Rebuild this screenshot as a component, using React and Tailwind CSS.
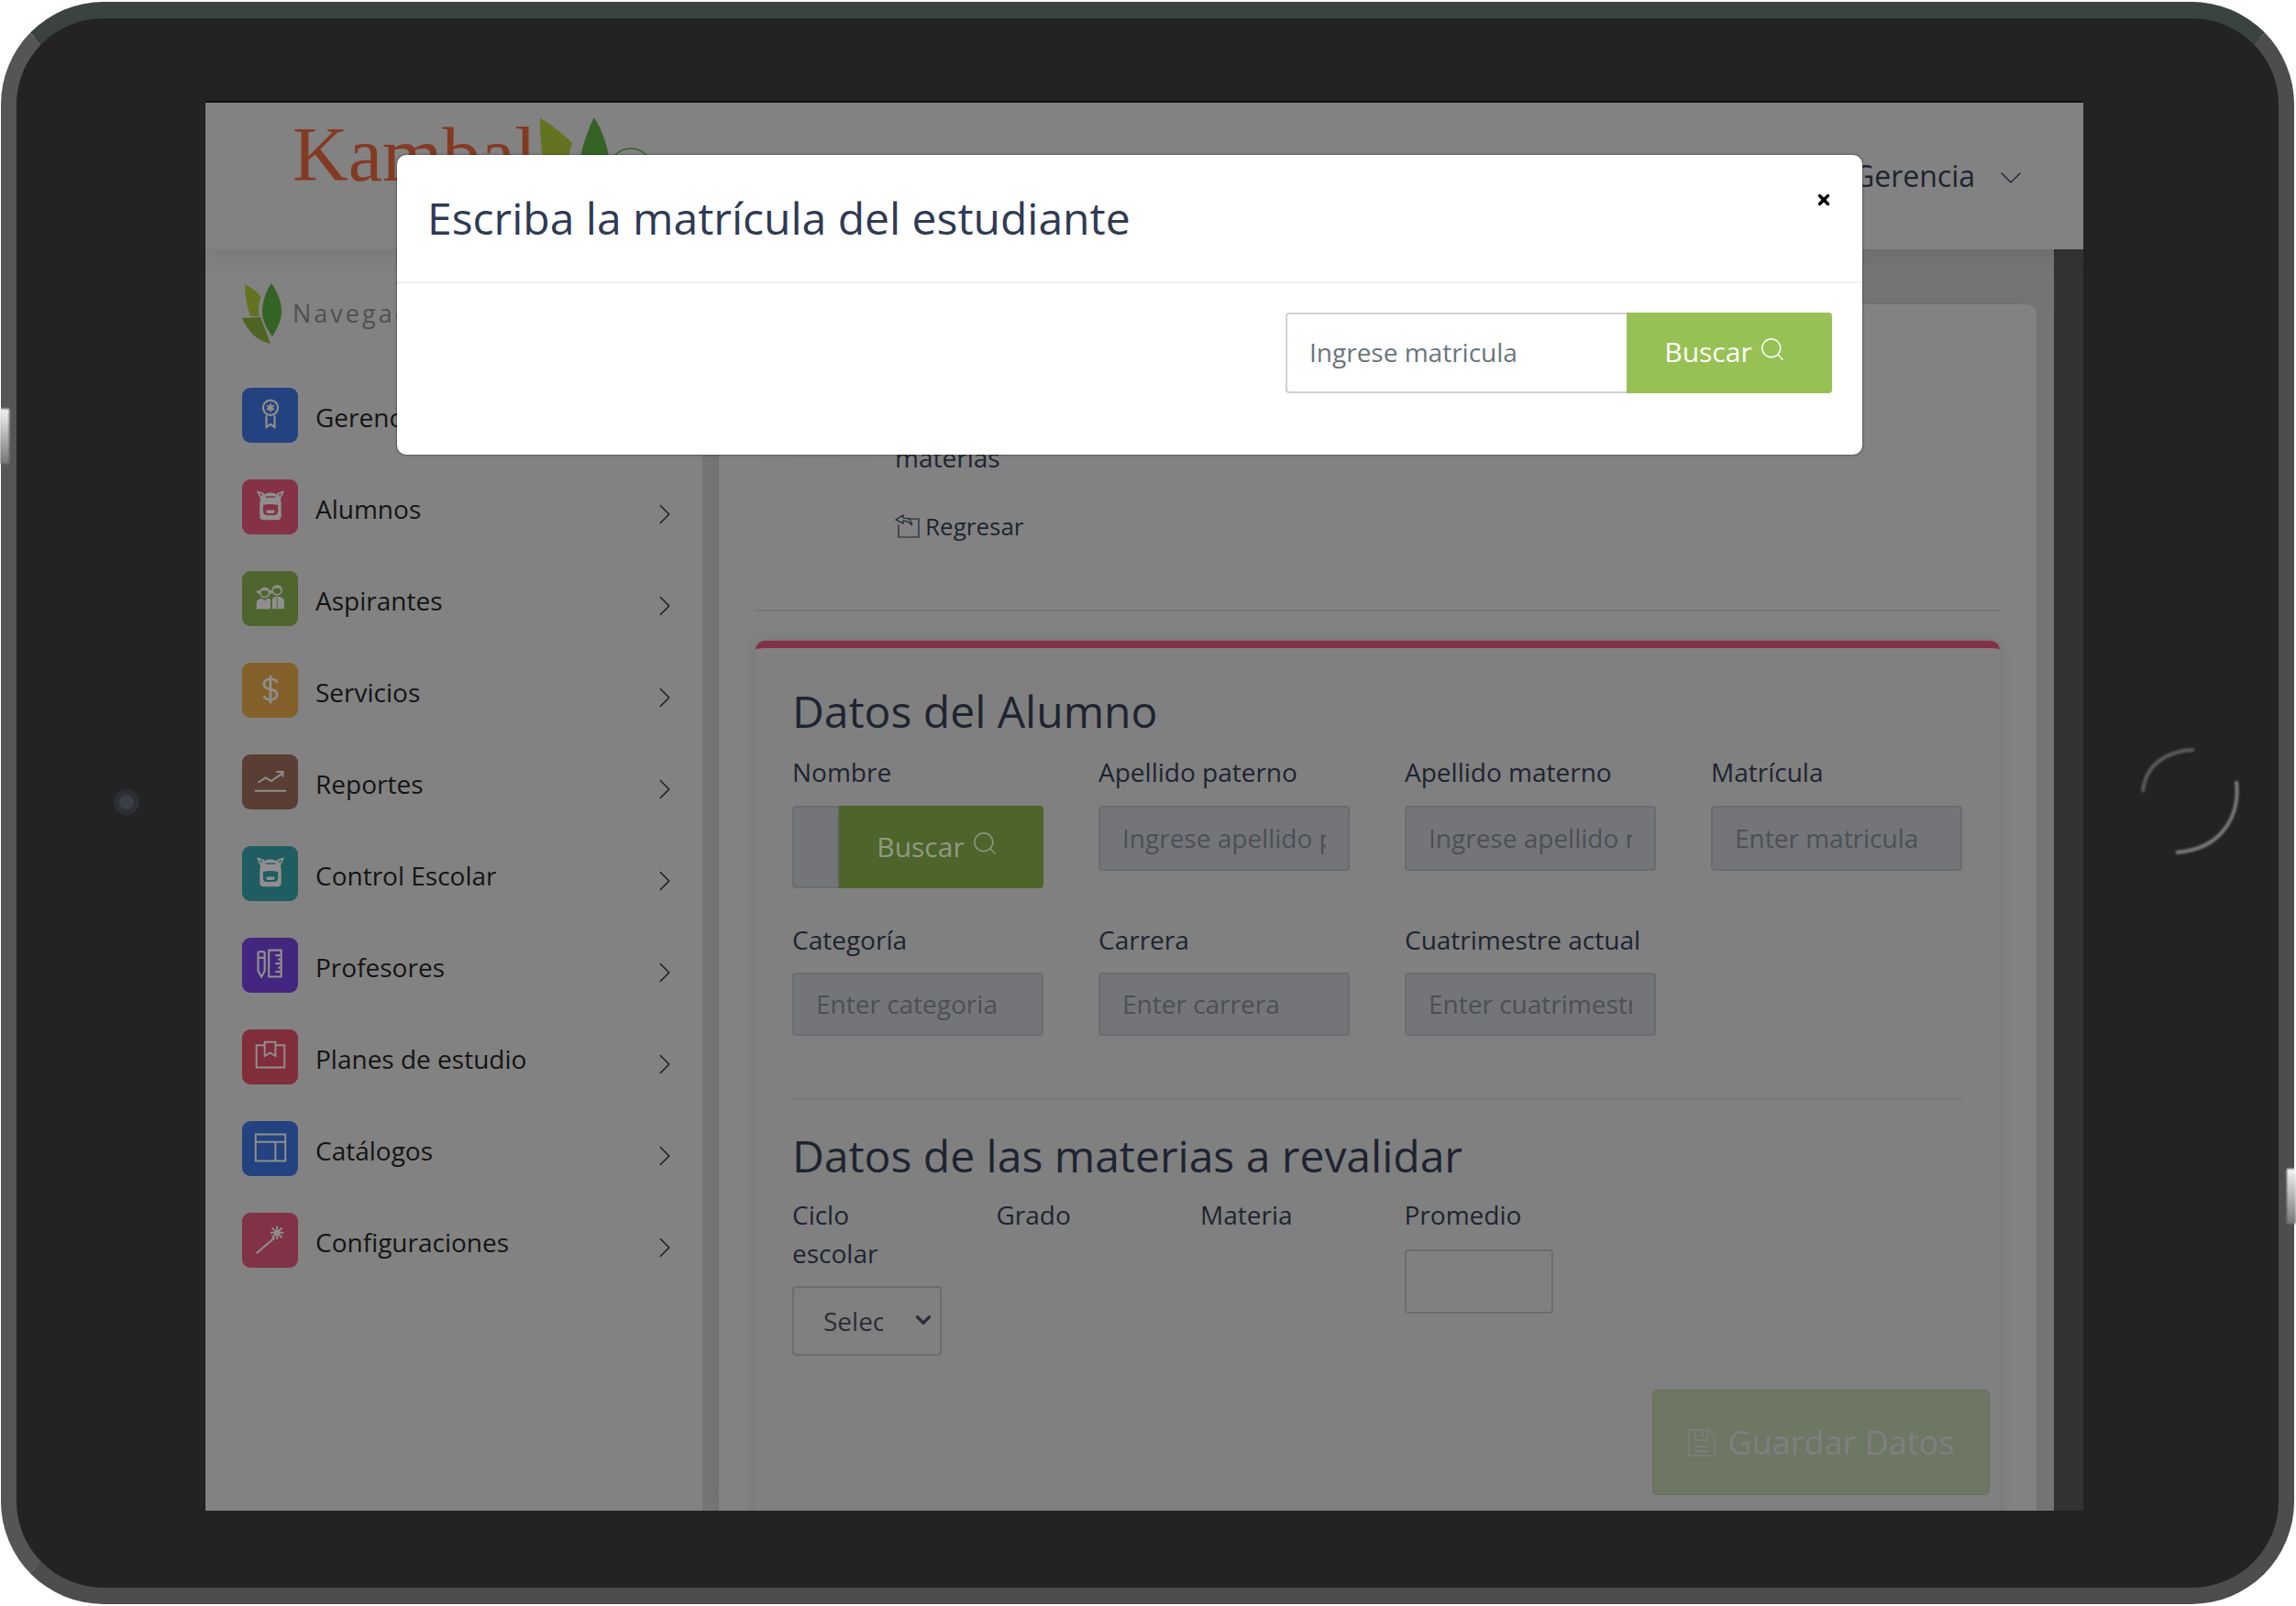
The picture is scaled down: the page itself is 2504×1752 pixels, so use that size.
import React from "react";
import { Search, ChevronRight, ChevronDown, X } from "lucide-react";

const G = "#8f8f8f";
const Svg = ({ children }) => (
  <svg viewBox="0 0 40 40" width="36" height="36" fill="none" stroke={G} strokeWidth="2" className="-mt-[3px]">{children}</svg>
);
const Medal = () => (
  <Svg>
    <circle cx="20" cy="12" r="9" strokeWidth="2.400" />
    <path d="M20 7v10M15.700 9.500l8.600 5M24.300 9.500l-8.600 5" strokeWidth="2.400" />
    <path d="M15 21.500v14l5-3.500 5 3.500v-14" strokeWidth="2.400" />
  </Svg>
);
const Backpack = ({ bg }) => (
  <Svg>
    <path d="M5 3l6 2-2 7zM35 3l-6 2 2 7z" strokeWidth="2" />
    <path d="M7 18C7 9 12 4 20 4s13 5 13 14v15c0 2-2 4-4 4H11c-2 0-4-2-4-4z" fill={G} stroke="none" />
    <path d="M14 9h12" stroke={bg} strokeWidth="1.500" />
    <path d="M11 19c6-1.500 12-1.500 18 0v7c0 3-2 5-4 5H15c-2 0-4-2-4-5z" fill={bg} stroke="none" />
    <path d="M15 25h10v2c0 1-1 2-2 2h-6c-1 0-2-1-2-2z" fill={G} stroke="none" />
  </Svg>
);
const BackpackRose = () => <Backpack bg="#853246" />;
const BackpackTeal = () => <Backpack bg="#1f5d60" />;
const People = () => (
  <Svg>
    <circle cx="13" cy="14" r="5.500" strokeWidth="1.800" />
    <path d="M7 12c2-6 10-6 12 0-4-1-8-1-12 0z" fill={G} stroke="none" />
    <circle cx="5.500" cy="13" r="2.200" fill={G} stroke="none" />
    <circle cx="20.500" cy="13" r="2.200" fill={G} stroke="none" />
    <circle cx="28" cy="11" r="5.500" strokeWidth="1.800" />
    <path d="M22 10c1-7 11-7 12 0-4-2-8-2-12 0z" fill={G} stroke="none" />
    <path d="M3 34v-8c0-3 3-5 7-5l3 3 3-3c1 0 3 0 4 1v12z" fill={G} stroke="none" />
    <path d="M21.500 34V23c0-3 3-5 6.500-5 4 0 9 2 9 6v10z" fill={G} stroke="#4e652d" strokeWidth="1" />
    <path d="M28 20v12" stroke="#4e652d" strokeWidth="1" />
  </Svg>
);
const Dollar = () => (
  <Svg>
    <path d="M28 12c-1-3-4-4.500-8-4.500-5 0-8 2.500-8 6s3 5.500 8 6.500 8 3 8 6.500-3 6-8 6c-4 0-7-1.500-8-4.500M20 3v34" strokeWidth="3" />
  </Svg>
);
const Chart = () => (
  <Svg>
    <path d="M5 22l9-6 7 4 13-9M27 9h8v6" strokeWidth="2.200" />
    <path d="M1 32h38" strokeWidth="2.200" />
  </Svg>
);
const PencilRuler = () => (
  <Svg>
    <path d="M5 6c0-2 8-2 8 0v22l-4 7-4-7z" strokeWidth="2.400" />
    <path d="M5 12h8" strokeWidth="2.400" />
    <path d="M18 3h15v32H18zM26 9h7M29 14h4M26 19h7M29 24h4M26 29h7" strokeWidth="2.400" />
  </Svg>
);
const Book = () => (
  <Svg>
    <path d="M3 7h34v27H3z" strokeWidth="2.200" />
    <path d="M13 3h13v17l-6.500-4-6.500 4z" fill="#822d3a" strokeWidth="2.200" />
  </Svg>
);
const Layout = () => (
  <Svg>
    <path d="M2 4h36v32H2zM2 13h36M26 13v23" strokeWidth="2.200" />
  </Svg>
);
const Wand = () => (
  <Svg>
    <path d="M3 37l22-19" strokeWidth="2.400" />
    <path d="M28 4v16M20 12h16M22 6l12 12M34 6L22 18" strokeWidth="2.200" />
  </Svg>
);

const NAV = [
  ["Gerencia", "bg-[#234280]", Medal],
  ["Alumnos", "bg-[#853246]", BackpackRose],
  ["Aspirantes", "bg-[#4e652d]", People],
  ["Servicios", "bg-[#84602a]", Dollar],
  ["Reportes", "bg-[#5a3d33]", Chart],
  ["Control Escolar", "bg-[#1f5d60]", BackpackTeal],
  ["Profesores", "bg-[#43267f]", PencilRuler],
  ["Planes de estudio", "bg-[#822d3a]", Book],
  ["Catálogos", "bg-[#234280]", Layout],
  ["Configuraciones", "bg-[#823246]", Wand],
];

const Leaves = () => (
  <svg viewBox="0 0 44 66" width="44" height="66" className="shrink-0">
    <path d="M3 1c8 4 14 9 18 14-3 6-4 13-2 21L9 36C5 25 3 13 3 1z" fill="#64731f" />
    <path d="M32 0c7 10 11 21 11 31 0 10-5 19-10 27-6-8-11-17-11-27C22 20 26 9 32 0z" fill="#356325" />
    <path d="M0 38l20-1 11 29C16 63 6 52 0 38z" fill="#4e6423" />
  </svg>
);

const Label = ({ children, className = "" }) => (
  <label className={`block text-[28px] leading-[42px] text-[#1e2430] ${className}`}>{children}</label>
);

const Field = ({ label, placeholder, labelClass, inputClass }) => (
  <div>
    <Label className={labelClass}>{label}</Label>
    <input
      disabled
      placeholder={placeholder}
      className={`block w-full px-[24px] pb-[2px] rounded-[4px] border-2 border-[#6b6c6e] bg-[#737578] text-[28px] placeholder:text-[#4c5054] outline-none ${inputClass}`}
    />
  </div>
);

const Home = () => (
  <svg width="120" height="124" viewBox="0 0 120 124" className="absolute left-[2331px] top-[812px] blur-[1px]">
    <path d="M6 52C8 24 30 7 62 6" fill="none" stroke="#5c5c5c" strokeWidth="4" />
    <path d="M108 40c4 34-12 74-66 78" fill="none" stroke="#7a7a7a" strokeWidth="4" />
  </svg>
);

export default function App() {
  return (
    <div className="relative w-[2504px] h-[1752px] bg-white overflow-hidden font-['Open_Sans',sans-serif]">
      {/* Tablet frame */}
      <div className="absolute left-[1px] top-[2px] w-[2501px] h-[1748px] rounded-[112px] bg-[#232323] border-x-[17px] border-b-[18px] border-t-[18px] border-l-[#555555] border-r-[#4d4d4d] border-b-[#4d4d4d] border-t-[#3b4341] pl-[206px] pt-[92px]">
        {/* Screen */}
        <div className="relative w-[2048px] h-[1536px] bg-[#828282] flex flex-col overflow-hidden shadow-[0_-2px_0_#111111,-1px_0_0_#1b1b1b]">
          <header className="relative z-10 h-[160px] shrink-0 bg-[#828282] shadow-[0_6px_24px_rgba(0,0,0,0.08)] flex items-start justify-between">
            <div className="relative ml-[95px] mt-[2px] flex items-start">
              <span className="font-['Liberation_Serif',serif] text-[84px] leading-[110px] text-[#843a22]">Kambal</span>
              <svg viewBox="0 0 130 70" width="130" height="70" className="absolute left-[269px] top-[14px]">
                <path d="M1 1c14 8 26 18 35 27-4 12-6 24-6 40H8C3 46 1 22 1 1z" fill="#64731f" />
                <path d="M60 0c9 14 15 32 17 50v20H41c2-24 8-48 19-70z" fill="#356325" />
                <circle cx="100" cy="58" r="24" fill="none" stroke="#356325" strokeWidth="1.500" />
              </svg>
            </div>
            <div className="mt-[58px] mr-[59px] flex items-center gap-[19px] text-[32px] leading-[44px] text-[#1e2430]">
              <span>Gerencia</span>
              <ChevronDown size={40} strokeWidth={0.8} className="mt-[3px]" />
            </div>
          </header>

          <div className="flex flex-1 min-h-0">
            {/* Sidebar */}
            <aside className="w-[542px] shrink-0 bg-[#828282] pl-[40px] pr-[22px]">
              <div className="flex items-center gap-[11px] mt-[37px] mb-[48px]">
                <Leaves />
                <span className="text-[27px] tracking-[3px] text-[#4f5053]">Navegación</span>
              </div>
              <nav className="flex flex-col gap-[40px]">
                {NAV.map(([label, bg, Icon]) => (
                  <a key={label} className="flex items-center h-[60px]">
                    <span className={`w-[61px] h-[60px] rounded-[9px] ${bg} flex items-center justify-center shrink-0`}>
                      <Icon />
                    </span>
                    <span className="ml-[19px] flex-1 text-[28px] leading-[42px] pt-[4px] text-[#141414]">{label}</span>
                    <ChevronRight size={38} strokeWidth={0.9} className="text-[#1b1b1b] mt-[16px]" />
                  </a>
                ))}
              </nav>
            </aside>

            {/* Content */}
            <main className="relative flex-1 bg-[#747577] pl-[18px] pr-[19px] pt-[60px] overflow-hidden">
              <div className="h-full bg-[#828282] rounded-t-[10px] pl-[40px] pr-[40px] shadow-[0_0_20px_rgba(0,0,0,0.06)]">
                <div className="relative pl-[152px] pt-[146px]">
                  <div className="absolute left-[20px] top-[130px] w-[90px] h-[24px] rounded-full bg-[#707070]/40 blur-[10px]"></div>
                  <p className="text-[28px] leading-[42px] text-[#1e2430]">materias</p>
                  <a className="mt-[33px] flex items-center gap-[6px] text-[26px] leading-[42px] text-[#1e2430]">
                    <svg viewBox="0 0 27 26" width="27" height="26" fill="none" stroke="#1e2430" strokeWidth="1.200">
                      <path d="M4 11v14h22V5H14" />
                      <path d="M1 6l8-5v3l7 1 3 7-5-4-5-1v3z" />
                    </svg>
                    Regresar
                  </a>
                </div>
                <hr className="mt-[70px] border-t-2 border-[#777778]" />

                <section className="mt-[32px] h-[960px] bg-[#808080] border-t-[8px] border-[#823044] rounded-t-[10px] shadow-[0_0_16px_rgba(0,0,0,0.1)] pl-[40px] pr-[41px]">
                  <h3 className="pt-[39px] text-[48px] leading-[60px] text-[#1e2430]">Datos del Alumno</h3>
                  <div className="mt-[15px] grid grid-cols-4 gap-x-[60px] gap-y-[35px]">
                    <div>
                      <Label className="mb-[16px]">Nombre</Label>
                      <div className="flex h-[90px]">
                        <input disabled className="w-[51px] min-w-0 rounded-l-[4px] border-2 border-[#6b6c6e] bg-[#737578]" />
                        <button className="flex-1 rounded-r-[4px] bg-[#4d642b] text-[#8f9a82] text-[30px] pr-[8px] pb-[2px] flex items-center justify-center gap-[7px]">
                          Buscar <Search size={30} strokeWidth={1.100} className="-mt-[6px]" />
                        </button>
                      </div>
                    </div>
                    <Field label="Apellido paterno" placeholder="Ingrese apellido paterno" labelClass="mb-[16px]" inputClass="h-[71px]" />
                    <Field label="Apellido materno" placeholder="Ingrese apellido materno" labelClass="mb-[16px]" inputClass="h-[71px]" />
                    <Field label="Matrícula" placeholder="Enter matricula" labelClass="mb-[16px]" inputClass="h-[71px]" />
                    <Field label="Categoría" placeholder="Enter categoria" labelClass="mb-[15px]" inputClass="h-[69px]" />
                    <Field label="Carrera" placeholder="Enter carrera" labelClass="mb-[15px]" inputClass="h-[69px]" />
                    <Field label="Cuatrimestre actual" placeholder="Enter cuatrimestre" labelClass="mb-[15px]" inputClass="h-[69px]" />
                  </div>
                  <hr className="mt-[68px] border-t-2 border-[#777778]" />
                  <h3 className="mt-[31px] text-[48px] leading-[60px] text-[#1e2430]">Datos de las materias a revalidar</h3>
                  <div className="mt-[13px] grid grid-cols-[162.500px_162.500px_162.500px_162.500px] gap-x-[60px]">
                    <div>
                      <Label className="mb-[15px] w-[120px]">Ciclo escolar</Label>
                      <div className="relative">
                        <select disabled className="appearance-none block w-full h-[76px] pl-[32px] pr-[62px] rounded-[4px] border-2 border-[#6b6c6e] bg-transparent text-[28px] text-[#2a2e36] opacity-100">
                          <option>Seleccionar</option>
                        </select>
                        <ChevronDown size={26} strokeWidth={3} className="absolute right-[7px] top-[24px] text-[#2a2e36]" />
                      </div>
                    </div>
                    <Label>Grado</Label>
                    <Label>Materia</Label>
                    <div>
                      <Label className="mb-[17px]">Promedio</Label>
                      <input disabled className="block w-full h-[70px] rounded-[4px] border-2 border-[#6b6c6e] bg-transparent" />
                    </div>
                  </div>
                  <div className="mt-[37px] -mr-[30px] flex justify-end">
                    <button className="w-[368px] h-[115px] rounded-[5px] bg-[#6e7664] border border-[#687159] text-[#7f807f] text-[36px] flex items-center justify-center gap-[14px]">
                      <svg viewBox="0 0 30 30" width="30" height="30" fill="none" stroke="#7f807f" strokeWidth="1.300">
                        <path d="M1 1h21l7 7v21H1z" />
                        <path d="M8 1v11h13V1M16 3v6M7 19h16M7 24h16" />
                      </svg>
                      Guardar Datos
                    </button>
                  </div>
                </section>
              </div>
            </main>

            <div className="w-[32px] shrink-0 bg-[#333333]"></div>
          </div>

          {/* Modal */}
          <div className="absolute z-20 left-[209px] top-[57px] w-[1598px] h-[327px] rounded-[10px] bg-white shadow-[0_0_3px_rgba(0,0,0,0.6)] flex flex-col">
            <div className="relative h-[140px] border-b-2 border-[#eef0f3] pl-[33px] pt-[34px]">
              <h2 className="text-[48px] leading-[70px] text-[#2f3a54]">Escriba la matrícula del estudiante</h2>
              <button className="absolute right-[33px] top-[40px] text-black">
                <X size={18} strokeWidth={4.500} />
              </button>
            </div>
            <div className="flex justify-end pr-[33px] pt-[32px]">
              <input
                placeholder="Ingrese matricula"
                className="w-[372px] h-[88px] px-[24px] pb-[2px] rounded-l-[4px] border-2 border-r-0 border-[#ced1d4] text-[28px] placeholder:text-[#6c757d] outline-none"
              />
              <button className="w-[224px] h-[88px] rounded-r-[4px] bg-[#97c155] text-white text-[30px] pr-[9px] pb-[3px] flex items-center justify-center gap-[7px]">
                Buscar <Search size={30} strokeWidth={1.100} className="-mt-[6px]" />
              </button>
            </div>
          </div>
        </div>
      </div>

      {/* Device hardware */}
      <div className="absolute left-[124px] top-[861px] w-[28px] h-[28px] rounded-full bg-[#3a3f45] border-[6px] border-[#2c2f33]"></div>
      <Home />
      <div className="absolute left-0 top-[446px] w-[10px] h-[60px] blur-[1px] bg-gradient-to-b from-[#f5f5f5] to-[#777777]"></div>
      <div className="absolute right-0 top-[1275px] w-[10px] h-[60px] blur-[1px] bg-gradient-to-b from-[#f5f5f5] to-[#777777]"></div>
    </div>
  );
}
